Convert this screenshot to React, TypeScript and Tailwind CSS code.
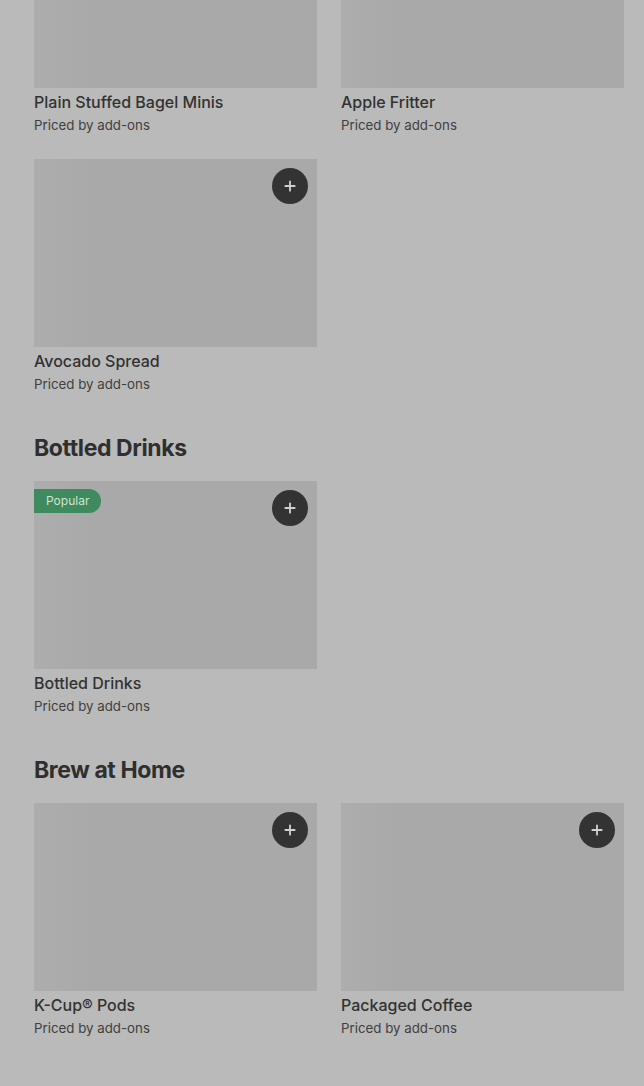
import { Plus } from 'lucide-react';

type Item = { name: string; popular?: boolean; hideAdd?: boolean };

const sections: { title?: string; items: Item[] }[] = [
  {
    items: [
      { name: 'Plain Stuffed Bagel Minis', hideAdd: true },
      { name: 'Apple Fritter', hideAdd: true },
      { name: 'Avocado Spread' },
    ],
  },
  { title: 'Bottled Drinks', items: [{ name: 'Bottled Drinks', popular: true }] },
  { title: 'Brew at Home', items: [{ name: 'K-Cup® Pods' }, { name: 'Packaged Coffee' }] },
];

function ItemCard({ item }: { item: Item }) {
  return (
    <div className="flex flex-col">
      <div className="relative h-[188px] w-full bg-[#a9a9a9] bg-gradient-to-r from-[#adadad] to-[#a9a9a9] to-[20%]">
        {item.popular && (
          <span className="absolute left-0 top-2 flex h-6 items-center rounded-r-full bg-[#3f8a5e] pl-3 pr-3 text-[12px] text-[#cfe3d6]">
            Popular
          </span>
        )}
        {!item.hideAdd && (
          <button className="absolute right-[9px] top-[9px] flex h-9 w-9 items-center justify-center rounded-full bg-[#333333] text-[#d0d0d0]">
            <Plus size={16} strokeWidth={2.75} />
          </button>
        )}
      </div>
      <p className="mt-1 text-[16px] leading-5 font-medium text-[#323232]">{item.name}</p>
      <p className="mt-[3px] text-[13.3px] leading-5 text-[#404040]">Priced by add-ons</p>
    </div>
  );
}

export default function App() {
  return (
    <div className="min-h-[1086px] w-full overflow-hidden bg-[#bababa] pl-[34px] pr-5 font-['Inter','Liberation_Sans',sans-serif]">
      <div className="-mt-[100px]">
        {sections.map((s, i) => (
          <section key={i} className={i > 0 ? 'mt-[38px]' : ''}>
            {s.title && (
              <h2 className="mb-[17px] text-[23px] leading-8 font-bold tracking-[-0.4px] text-[#2f2f2f]">
                {s.title}
              </h2>
            )}
            <div className="grid grid-cols-2 gap-x-6 gap-y-6">
              {s.items.map((it) => (
                <ItemCard key={it.name} item={it} />
              ))}
            </div>
          </section>
        ))}
      </div>
    </div>
  );
}
